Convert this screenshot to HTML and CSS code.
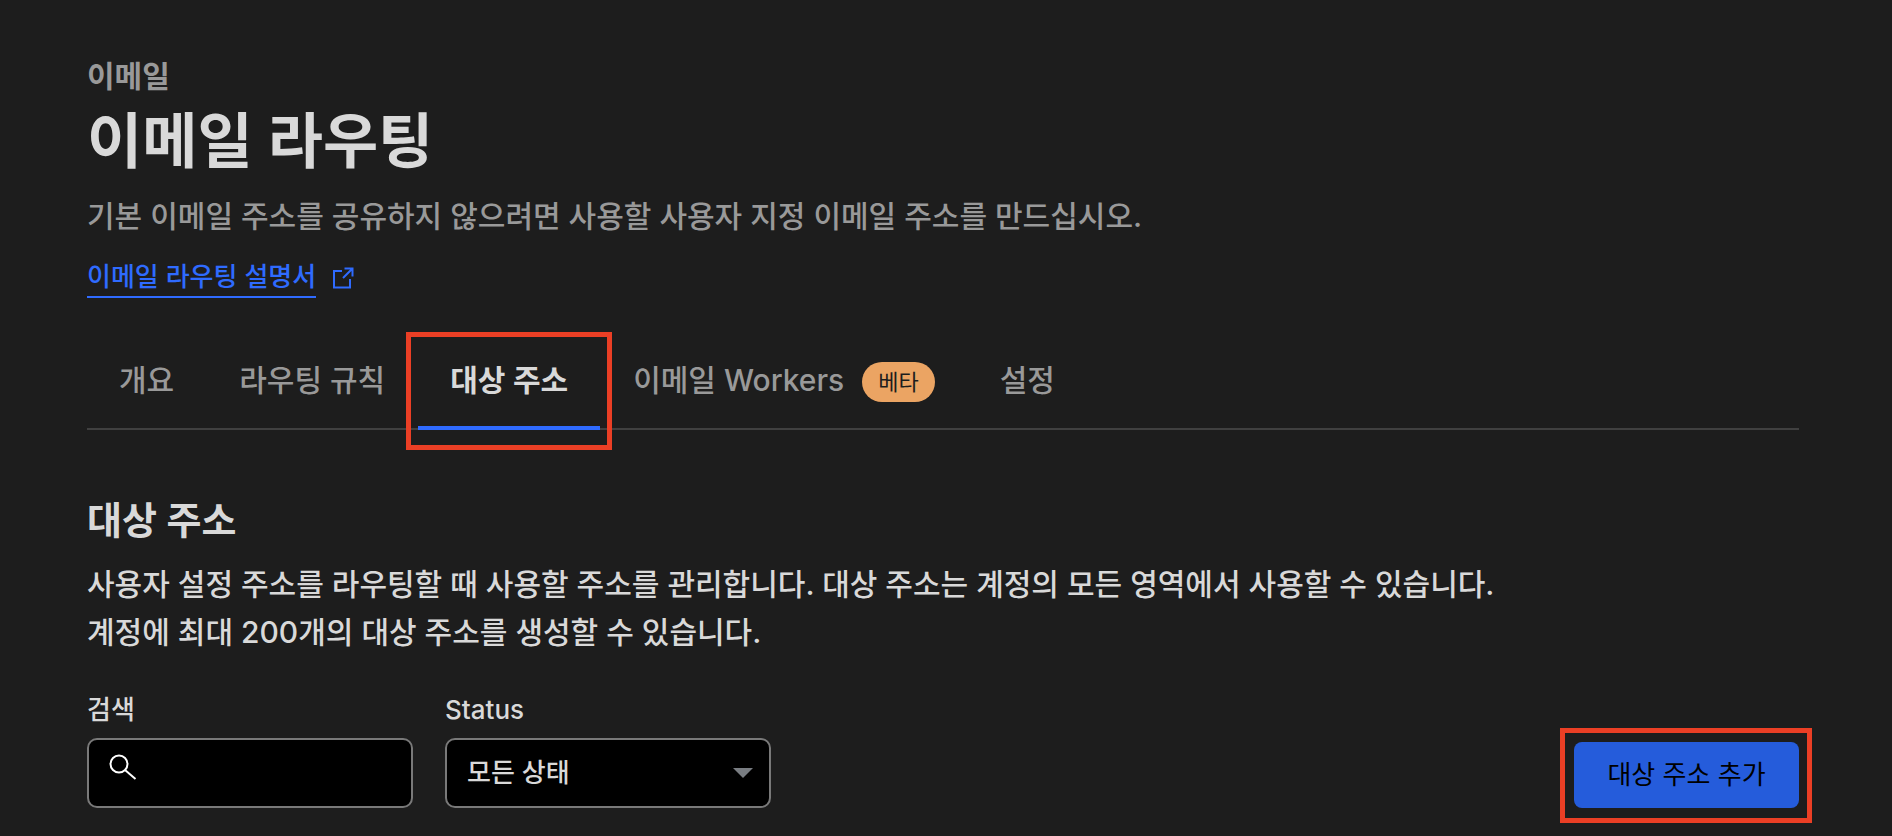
FILE: index.html
```html
<!DOCTYPE html>
<html lang="ko">
<head>
<meta charset="utf-8">
<meta name="viewport" content="width=device-width, initial-scale=1">
<title>이메일 라우팅</title>
<link rel="stylesheet" href="styles.css">
</head>
<body>
<main class="page">
  <header class="intro">
    <p class="eyebrow">이메일</p>
    <h1 class="title">이메일 라우팅</h1>
    <p class="lead">기본 이메일 주소를 공유하지 않으려면 사용할 사용자 지정 이메일 주소를 만드십시오.</p>
    <a class="doc-link" href="#docs">
      <span class="doc-text">이메일 라우팅 설명서</span>
      <svg class="doc-icon" viewBox="0 0 22 22" aria-hidden="true"><path d="M10 4H2v16.500h16V12M12.500 1.500h8v8M20.500 1.500L11 11"/></svg>
    </a>
  </header>

  <nav class="tabs">
    <a class="tab" href="#overview">개요</a>
    <a class="tab" href="#rules">라우팅 규칙</a>
    <a class="tab active" href="#addresses" aria-current="page">대상 주소</a>
    <a class="tab" href="#workers">이메일 Workers<span class="badge">베타</span></a>
    <a class="tab" href="#settings">설정</a>
  </nav>

  <section class="section" id="addresses">
    <h2 class="section-title">대상 주소</h2>
    <p class="section-text">사용자 설정 주소를 라우팅할 때 사용할 주소를 관리합니다. 대상 주소는 계정의 모든 영역에서 사용할 수 있습니다.<br>계정에 최대 200개의 대상 주소를 생성할 수 있습니다.</p>

    <form class="toolbar">
      <div class="field">
        <label class="label" for="search">검색</label>
        <div class="control">
          <svg class="search-icon" viewBox="0 0 28 26" aria-hidden="true"><circle cx="10" cy="10" r="8.500"/><path d="M16 16l10.500 9"/></svg>
          <input class="input" id="search" type="text">
        </div>
      </div>
      <div class="field">
        <label class="label" for="status">Status</label>
        <div class="control">
          <select class="select" id="status"><option>모든 상태</option></select>
          <svg class="caret" viewBox="0 0 20 10" aria-hidden="true"><path d="M0 0h20L10 10z"/></svg>
        </div>
      </div>
      <button class="add" type="button">대상 주소 추가</button>
    </form>
  </section>
</main>
</body>
</html>
```

FILE: styles.css
```css
* {
  box-sizing: border-box;
}

body {
  margin: 0;
  background: #1d1d1d;
  color: #d9d9d9;
  font-family: "Inter", "Noto Sans CJK KR", sans-serif;
  font-size: 30px;
  font-weight: 500;
  line-height: 48px;
}

h1, h2, p {
  margin: 0;
}

.page {
  padding: 52px 93px 28px 87px;
}

.eyebrow {
  color: #999;
  font-weight: 600;
}

.title {
  font-size: 60px;
  font-weight: 600;
  line-height: 82px;
}

.lead {
  margin-top: 10px;
  color: #999;
}

.doc-link {
  display: inline-flex;
  align-items: center;
  gap: 16px;
  margin-top: 18px;
  color: #2f6bff;
  font-size: 26px;
  line-height: 38px;
  text-decoration: none;
}

.doc-text {
  border-bottom: 2px solid #2f6bff;
}

.doc-icon {
  width: 22px;
  height: 22px;
  fill: none;
  stroke: currentColor;
  stroke-width: 2;
}

.tabs {
  display: flex;
  gap: 1px;
  margin-top: 35px;
  border-bottom: 2px solid #404040;
}

.tab {
  display: flex;
  align-items: center;
  height: 96px;
  margin-bottom: -2px;
  padding: 0 32px 4px;
  color: #999;
  text-decoration: none;
  white-space: nowrap;
}

.active {
  position: relative;
  border-bottom: 4px solid #2f6bff;
  padding-bottom: 0;
  color: #d9d9d9;
  font-weight: 600;
}

.active::after {
  content: "";
  position: absolute;
  inset: -2px -12px -24px -12px;
  border: 5px solid #eb3f25;
}

.badge {
  margin-top: 4px;
  margin-left: 18px;
  padding: 0 16px;
  border-radius: 20px;
  background: #eba463;
  color: #1d1d1d;
  font-size: 22px;
  font-weight: 400;
  line-height: 40px;
}

.section {
  padding-top: 66px;
}

.section-title {
  font-size: 38px;
  font-weight: 600;
}

.section-text {
  margin-top: 16px;
}

.toolbar {
  display: flex;
  align-items: flex-end;
  gap: 32px;
  margin-top: 34px;
}

.field {
  width: 326px;
}

.label {
  display: block;
  font-size: 26px;
  line-height: 40px;
  margin-bottom: 8px;
}

.control {
  position: relative;
}

.input,
.select {
  display: block;
  width: 100%;
  height: 70px;
  border: 2px solid #797979;
  border-radius: 10px;
  background: #000;
  color: #d9d9d9;
  font: inherit;
  font-size: 26px;
}

.input {
  padding: 0 20px 0 60px;
}

.select {
  padding: 0 48px 0 20px;
  appearance: none;
}

.search-icon {
  position: absolute;
  top: 16px;
  left: 22px;
  width: 28px;
  height: 26px;
  fill: none;
  stroke: #fff;
  stroke-width: 2;
}

.caret {
  position: absolute;
  top: 30px;
  right: 18px;
  width: 20px;
  height: 10px;
  fill: #797d82;
}

.add {
  position: relative;
  min-width: 225px;
  height: 66px;
  margin-left: auto;
  padding: 0 32px;
  border: 0;
  border-radius: 8px;
  background: #255cdb;
  color: #000;
  font: inherit;
  font-size: 26px;
  font-weight: 400;
}

.add::after {
  content: "";
  position: absolute;
  inset: -14px -13px -15px -14px;
  border: 5px solid #eb3f25;
}
```
